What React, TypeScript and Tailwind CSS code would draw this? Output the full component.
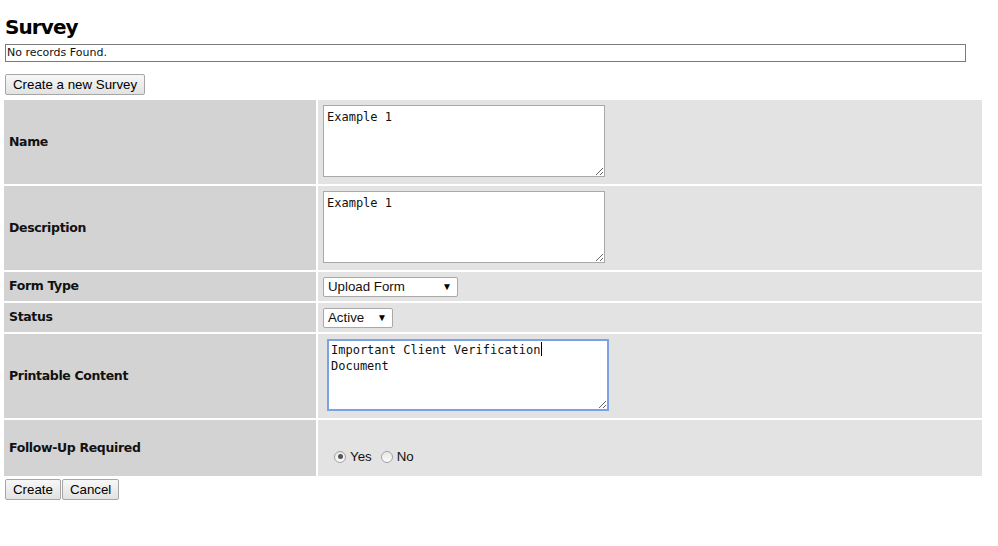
import type { ReactNode } from "react";

const labelFont = { fontFamily: '"DejaVu Sans", Verdana, sans-serif' };

function Row({ label, height, children }: { label: string; height: string; children: ReactNode }) {
  return (
    <>
      <div
        className={`${height} bg-[#d3d3d3] flex items-center pl-[5px] text-[12.5px] font-bold text-[#111] tracking-[-0.35px]`}
        style={labelFont}
      >
        {label}
      </div>
      <div className={`${height} bg-[#e3e3e3] pl-[5px] pt-[5px]`}>{children}</div>
    </>
  );
}

function Area({ value, focused }: { value: string; focused?: boolean }) {
  return (
    <textarea
      readOnly
      defaultValue={value}
      className={`block w-[282px] h-[72px] bg-white text-[12px] leading-[16px] text-[#111] outline-none ${
        focused ? "border-2 border-[#7ba2e4] px-[2px] pt-[1px]" : "border border-[#a9a9a9] px-[3px] pt-[3px]"
      }`}
      style={{ fontFamily: '"DejaVu Sans Mono", Consolas, monospace' }}
    />
  );
}

function Select({ value, width }: { value: string; width: string }) {
  return (
    <div
      className={`relative ${width} h-[20px] bg-white border border-[#a9a9a9] rounded-[2px] flex items-center pl-[4px] text-[13.3px] text-[#111]`}
      style={{ fontFamily: '"Liberation Sans", Arial, sans-serif' }}
    >
      {value}
      <span className="absolute right-[5px] top-[3px] text-[10px] leading-[12px] text-black">▼</span>
    </div>
  );
}

function Radio({ checked }: { checked?: boolean }) {
  return (
    <span className="inline-flex w-[12px] h-[12px] rounded-full border border-[#a3a3a3] bg-gradient-to-b from-[#e8e8e8] to-[#fafafa] items-center justify-center">
      {checked && <span className="w-[5px] h-[5px] rounded-full bg-[#555]" />}
    </span>
  );
}

function Btn({ children }: { children: ReactNode }) {
  return (
    <button
      className="h-[21px] px-[7px] border border-[#a6a6a6] rounded-[2px] bg-gradient-to-b from-[#f7f7f7] to-[#e2e2e2] text-[13.3px] text-black leading-none"
      style={{ fontFamily: '"Liberation Sans", Arial, sans-serif' }}
    >
      {children}
    </button>
  );
}

export default function App() {
  return (
    <div className="bg-white min-h-[546px] w-[998px] pl-[4px] pt-[14px]">
      <h1
        className="ml-[1px] text-[20px] leading-[26px] font-bold text-black tracking-[-0.9px]"
        style={labelFont}
      >
        Survey
      </h1>
      <div
        className="mt-[4px] ml-[1px] w-[961px] h-[18px] border border-[#7a7a7a] flex items-center pl-[1px] text-[11px] text-[#111]"
        style={labelFont}
      >
        No records Found.
      </div>
      <div className="mt-[12px] ml-[1px] h-[21px] flex">
        <Btn>Create a new Survey</Btn>
      </div>

      <div className="mt-[5px] grid grid-cols-[312px_664px] gap-[2px]">
        <Row label="Name" height="h-[84px]">
          <Area value="Example 1" />
        </Row>
        <Row label="Description" height="h-[84px]">
          <Area value="Example 1" />
        </Row>
        <Row label="Form Type" height="h-[29px]">
          <Select value="Upload Form" width="w-[135px]" />
        </Row>
        <Row label="Status" height="h-[29px]">
          <Select value="Active" width="w-[70px]" />
        </Row>
        <Row label="Printable Content" height="h-[84px]">
          <div className="relative ml-[4px]">
            <Area value="Important Client Verification Document" focused />
            <span className="absolute left-[214px] top-[3px] w-[1px] h-[14px] bg-black" />
          </div>
        </Row>
        <Row label="Follow-Up Required" height="h-[56px]">
          <div
            className="mt-[22px] ml-[11px] flex items-center text-[13.3px] text-[#111]"
            style={{ fontFamily: '"Liberation Sans", Arial, sans-serif' }}
          >
            <Radio checked />
            <span className="ml-[4px]">Yes</span>
            <span className="ml-[9px] flex">
              <Radio />
            </span>
            <span className="ml-[4px]">No</span>
          </div>
        </Row>
      </div>

      <div className="mt-[3px] ml-[1px] flex gap-[1px]">
        <Btn>Create</Btn>
        <Btn>Cancel</Btn>
      </div>
    </div>
  );
}
